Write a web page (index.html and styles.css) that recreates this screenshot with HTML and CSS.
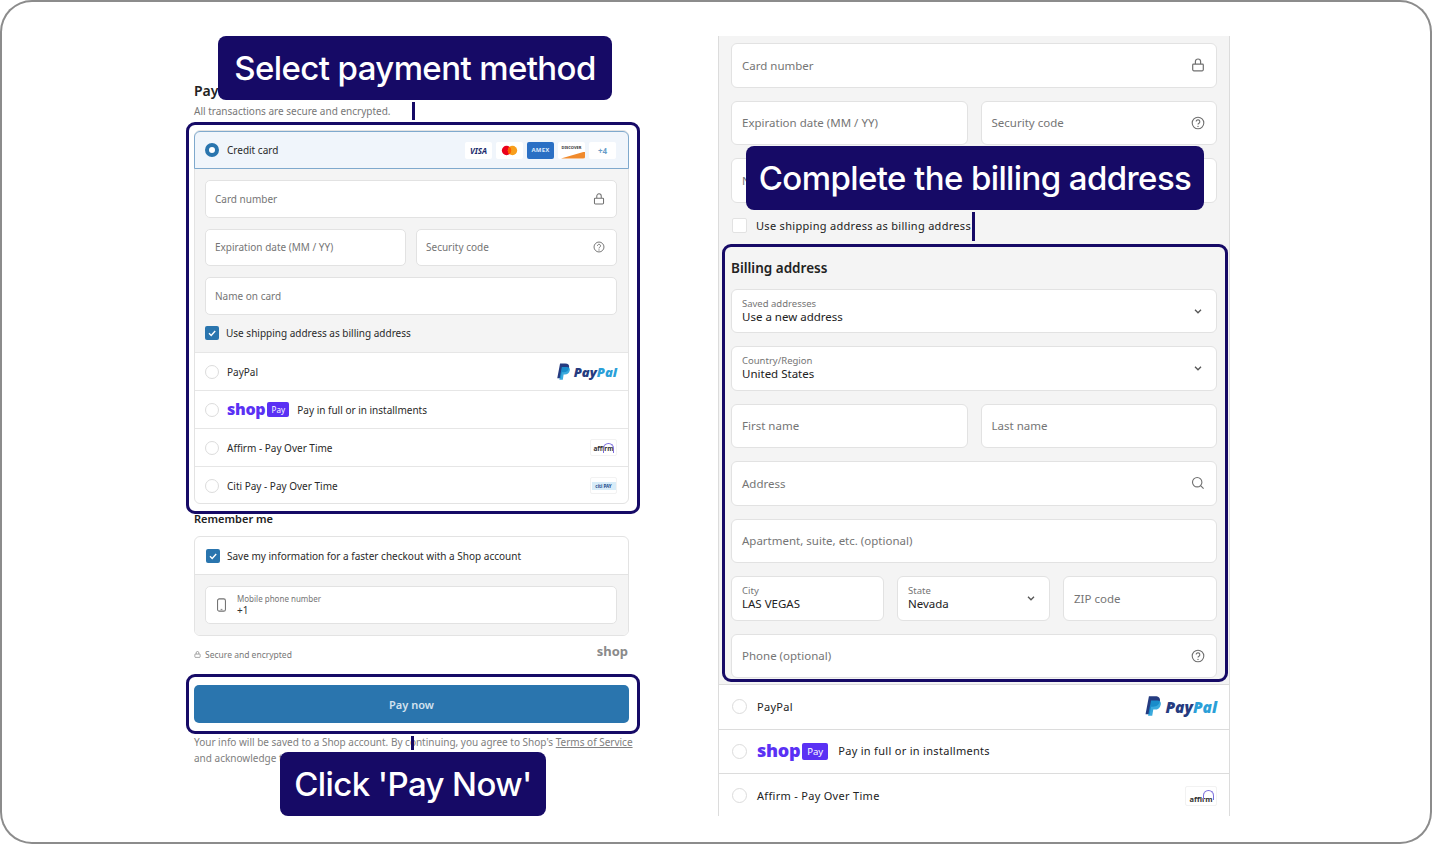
FILE: index.html
```html
<!DOCTYPE html>
<html lang="en">
<head>
<meta charset="utf-8">
<title>Checkout guide</title>
<link rel="stylesheet" href="styles.css">
</head>
<body>
<svg class="defs" width="0" height="0" aria-hidden="true">
  <defs>
    <symbol id="lock" viewBox="0 0 14 14"><path d="M2.5 6.2h9a.8.8 0 0 1 .8.8v4.6a1.2 1.2 0 0 1-1.2 1.2H2.9a1.2 1.2 0 0 1-1.2-1.2V7a.8.8 0 0 1 .8-.8z M4.4 6V3.6a2.6 2.6 0 0 1 5.2 0V6" fill="none" stroke="#707070" stroke-width="1.2"/></symbol>
    <symbol id="help" viewBox="0 0 14 14"><circle cx="7" cy="7" r="5.8" fill="none" stroke="#707070" stroke-width="1.1"/><path d="M5.2 5.6a1.8 1.8 0 1 1 2.7 1.6c-.6.4-.9.7-.9 1.4" fill="none" stroke="#707070" stroke-width="1.1"/><circle cx="7" cy="10.4" r=".7" fill="#707070"/></symbol>
    <symbol id="chev" viewBox="0 0 10 10"><path d="M2 3.8l3 3 3-3" fill="none" stroke="#555" stroke-width="1.3"/></symbol>
    <symbol id="search" viewBox="0 0 14 14"><circle cx="6.2" cy="6.2" r="4.7" fill="none" stroke="#707070" stroke-width="1.1"/><path d="M9.6 9.6l3 3" stroke="#707070" stroke-width="1.1"/></symbol>
    <symbol id="check" viewBox="0 0 14 14"><path d="M4 7.2l2.2 2.2L10.2 5" fill="none" stroke="#fff" stroke-width="1.4"/></symbol>
    <symbol id="pp" viewBox="0 0 20 24"><path d="M5.8 0h7.4c4 0 6.2 2.2 5.5 5.8-.8 4.4-3.8 6.4-7.8 6.4H8.300l-1.500 8.800H1.800z" fill="#253b80"/><path d="M8.300 4.800h7.300c3.300 0 4.700 1.900 4.100 5-.8 4-3.500 5.800-7 5.800h-1.800l-1.200 7.400H4.800z" fill="#179bd7" opacity=".85"/></symbol>
    <symbol id="phone" viewBox="0 0 12 16"><rect x="1.500" y="1" width="9" height="14" rx="2" fill="none" stroke="#707070" stroke-width="1.200"/><path d="M5 13h2" stroke="#707070"/></symbol>
  </defs>
</svg>

<main class="frame">
  <section class="left">
    <h1 class="title">Payment</h1>
    <p class="subtitle">All transactions are secure and encrypted.</p>

    <div class="accordion">
      <div class="row-selected">
        <span class="radio radio-on"></span>
        <span class="label">Credit card</span>
        <span class="brands">
          <span class="brand brand-visa">VISA</span>
          <span class="brand"><svg class="mc" viewBox="0 0 20 12"><circle cx="6.500" cy="6" r="5.500" fill="#eb001b"/><circle cx="13.500" cy="6" r="5.500" fill="#f79e1b"/><path d="M10 1.700a5.500 5.500 0 0 1 0 8.600 5.500 5.500 0 0 1 0-8.600z" fill="#ff5f00"/></svg></span>
          <span class="brand brand-amex">AMEX</span>
          <span class="brand brand-disc">DISCOVER<i class="swoosh"></i></span>
          <span class="brand brand-more">+4</span>
        </span>
      </div>
      <div class="card-form">
        <div class="field"><span class="ph">Card number</span><svg class="ico"><use href="#lock"/></svg></div>
        <div class="split">
          <div class="field"><span class="ph">Expiration date (MM / YY)</span></div>
          <div class="field"><span class="ph">Security code</span><svg class="ico"><use href="#help"/></svg></div>
        </div>
        <div class="field"><span class="ph">Name on card</span></div>
        <div class="check-line"><span class="checkbox"><svg viewBox="0 0 14 14"><use href="#check"/></svg></span><span class="label">Use shipping address as billing address</span></div>
      </div>
      <div class="pay-row"><span class="radio"></span><span class="label">PayPal</span><span class="paypal"><svg class="pp"><use href="#pp"/></svg><b class="pp-a">Pay</b><b class="pp-b">Pal</b></span></div>
      <div class="pay-row"><span class="radio"></span><span class="shop">shop</span><span class="shop-pay">Pay</span><span class="label shop-label">Pay in full or in installments</span></div>
      <div class="pay-row"><span class="radio"></span><span class="label">Affirm - Pay Over Time</span><span class="mini-logo"><i class="arc"></i>affirm</span></div>
      <div class="pay-row"><span class="radio"></span><span class="label">Citi Pay - Pay Over Time</span><span class="mini-logo citi"><span>citi PAY</span></span></div>
    </div>

    <h2 class="remember">Remember me</h2>
    <div class="save-box">
      <div class="save-top"><span class="checkbox"><svg viewBox="0 0 14 14"><use href="#check"/></svg></span><span class="label">Save my information for a faster checkout with a Shop account</span></div>
      <div class="save-form">
        <div class="field field-phone"><svg class="phone-ico"><use href="#phone"/></svg><div class="stack"><span class="float">Mobile phone number</span><span class="val">+1</span></div></div>
      </div>
    </div>
    <div class="secure"><span class="secure-text"><svg class="tiny-lock"><use href="#lock"/></svg>Secure and encrypted</span><b class="shop-grey">shop</b></div>
    <button class="pay-btn" type="button">Pay now</button>
    <p class="legal">Your info will be saved to a Shop account. By continuing, you agree to Shop's <u>Terms of Service</u><br>and acknowledge the Privacy Policy.</p>
  </section>

  <section class="right">
    <div class="r-form">
      <div class="r-field"><span class="ph">Card number</span><svg class="r-ico"><use href="#lock"/></svg></div>
      <div class="r-split">
        <div class="r-field"><span class="ph">Expiration date (MM / YY)</span></div>
        <div class="r-field"><span class="ph">Security code</span><svg class="r-ico"><use href="#help"/></svg></div>
      </div>
      <div class="r-field"><span class="ph">Name on card</span></div>
      <div class="r-check"><span class="r-box"></span><span class="r-label">Use shipping address as billing address</span></div>
      <h2 class="r-heading">Billing address</h2>
      <div class="r-field"><div class="stack"><span class="float">Saved addresses</span><span class="val">Use a new address</span></div><svg class="r-chev"><use href="#chev"/></svg></div>
      <div class="r-field"><div class="stack"><span class="float">Country/Region</span><span class="val">United States</span></div><svg class="r-chev"><use href="#chev"/></svg></div>
      <div class="r-split">
        <div class="r-field"><span class="ph">First name</span></div>
        <div class="r-field"><span class="ph">Last name</span></div>
      </div>
      <div class="r-field"><span class="ph">Address</span><svg class="r-ico"><use href="#search"/></svg></div>
      <div class="r-field"><span class="ph">Apartment, suite, etc. (optional)</span></div>
      <div class="r-triple">
        <div class="r-field"><div class="stack"><span class="float">City</span><span class="val">LAS VEGAS</span></div></div>
        <div class="r-field"><div class="stack"><span class="float">State</span><span class="val">Nevada</span></div><svg class="r-chev"><use href="#chev"/></svg></div>
        <div class="r-field"><span class="ph">ZIP code</span></div>
      </div>
      <div class="r-field"><span class="ph">Phone (optional)</span><svg class="r-ico"><use href="#help"/></svg></div>
    </div>
    <div class="r-row"><span class="r-radio"></span><span class="r-label">PayPal</span><span class="paypal r-paypal"><svg class="pp"><use href="#pp"/></svg><b class="pp-a">Pay</b><b class="pp-b">Pal</b></span></div>
    <div class="r-row"><span class="r-radio"></span><span class="shop r-shop">shop</span><span class="shop-pay r-shop-pay">Pay</span><span class="r-label r-shop-label">Pay in full or in installments</span></div>
    <div class="r-row"><span class="r-radio"></span><span class="r-label">Affirm - Pay Over Time</span><span class="mini-logo r-mini"><i class="arc"></i>affirm</span></div>
  </section>

  <div class="hl hl-methods"></div>
  <div class="hl hl-pay"></div>
  <div class="hl hl-billing"></div>
  <div class="stem stem-methods"></div>
  <div class="stem stem-pay"></div>
  <div class="stem stem-billing"></div>
  <div class="callout callout-methods">Select payment method</div>
  <div class="callout callout-pay">Click 'Pay Now'</div>
  <div class="callout callout-billing">Complete the billing address</div>
</main>
</body>
</html>
```
FILE: styles.css
```css
* { box-sizing: border-box; }
html, body { margin: 0; height: 100%; background: #fff; }
.defs { position: absolute; }
.frame {
  position: relative;
  display: flex;
  align-items: flex-start;
  width: 100%;
  height: 844px;
  overflow: hidden;
  border-radius: 32px;
  box-shadow: inset 0 0 0 2px #8c8c8c;
  font-family: "Noto Sans", "Open Sans", sans-serif;
  color: #222;
}

/* left column */
.left { width: 435px; margin-left: 194px; padding-top: 82px; }
.title { margin: 0; font-size: 14px; line-height: 18px; font-weight: 600; color: #222; }
.subtitle { margin: 3px 0 0; font-size: 10px; line-height: 16px; color: #777; }
.accordion {
  margin-top: 11px;
  height: 374px;
  border: 1px solid #e3e3e3;
  border-radius: 6px;
  background: #fff;
}
.row-selected {
  display: flex;
  align-items: center;
  height: 38px;
  margin: 0 -1px;
  padding: 0 12px 0 10px;
  background: #f0f5fb;
  border: 1.5px solid #7fa9cd;
  border-radius: 6px 6px 0 0;
}
.radio {
  flex: none;
  width: 14px;
  height: 14px;
  margin-right: 8px;
  border: 1px solid #dcdcdc;
  border-radius: 50%;
  background: #fff;
}
.radio-on { border: 4px solid #2a75ae; }
.label { font-size: 10px; line-height: 14px; color: #2a2a2a; white-space: nowrap; }
.brands { display: flex; gap: 4px; margin-left: auto; }
.brand {
  position: relative;
  display: flex;
  align-items: center;
  justify-content: center;
  width: 27px;
  height: 17px;
  overflow: hidden;
  border-radius: 2px;
  background: #fff;
  font-size: 8px;
  font-weight: 700;
}
.brand-visa { color: #1a2a6c; font-style: italic; }
.mc { width: 17px; height: 11px; }
.brand-amex { background: #2a6fc4; color: #dbe9fb; font-size: 6px; letter-spacing: .2px; }
.brand-disc { align-items: flex-start; padding-top: 3px; font-size: 4px; color: #333; }
.swoosh { position: absolute; right: 0; bottom: 0; width: 24px; height: 7px; background: #f08a2c; clip-path: polygon(100% 0, 100% 100%, 0 100%); }
.brand-more { color: #6a9cc8; font-size: 8px; }
.card-form {
  display: flex;
  flex-direction: column;
  gap: 11px;
  height: 183px;
  padding: 11px 11px 0 10px;
  background: #f4f4f4;
}
.field {
  display: flex;
  align-items: center;
  justify-content: space-between;
  height: 37.500px;
  padding: 0 11px 0 9px;
  background: #fff;
  border: 1px solid #e2e2e2;
  border-radius: 5px;
}
.split { display: grid; grid-template-columns: 1fr 1fr; gap: 10px; }
.ph { font-size: 10px; color: #757575; white-space: nowrap; }
.ico { width: 12px; height: 12px; }
.check-line { display: flex; align-items: center; height: 14px; }
.checkbox {
  flex: none;
  display: block;
  width: 14px;
  height: 14px;
  margin-right: 7px;
  border-radius: 2px;
  background: #2a75ae;
}
.checkbox svg { display: block; width: 14px; height: 14px; }
.pay-row {
  display: flex;
  align-items: center;
  height: 38px;
  padding: 0 11px 0 10px;
  border-top: 1px solid #e6e6e6;
}
.paypal { display: flex; align-items: center; margin-left: auto; font-size: 13px; font-style: italic; font-weight: 800; font-family: "Open Sans", sans-serif; }
.pp { width: 14px; height: 18px; margin-right: 4px; }
.pp-a { color: #253b80; }
.pp-b { color: #2b9fd8; }
.shop { font-size: 16px; font-weight: 800; line-height: 16px; color: #5a31f4; letter-spacing: -.3px; font-family: "Open Sans", sans-serif; margin-top: -2px; }
.shop-pay { margin-left: 2px; width: 22px; height: 15px; border-radius: 2px; background: #5a31f4; color: #fff; font-size: 8px; line-height: 15px; text-align: center; }
.shop-label { margin-left: 8px; }
.mini-logo {
  position: relative;
  display: flex;
  align-items: flex-end;
  justify-content: center;
  margin-left: auto;
  width: 27px;
  height: 17px;
  padding-bottom: 2px;
  border: 1px solid #f2f2f2;
  border-radius: 2px;
  font-size: 6.500px;
  line-height: 8px;
  font-weight: 700;
  color: #333;
}
.arc { position: absolute; right: 2px; top: 3px; width: 11px; height: 10px; border: 1.200px solid #7c6fdc; border-bottom: 0; border-radius: 6px 6px 0 0; }
.citi { align-items: center; padding: 0; }
.citi span { display: block; width: 24px; background: #d8ecf8; text-align: center; font-size: 4.500px; color: #1b4b8c; }

.remember { margin: 8px 0 0; font-size: 11px; line-height: 14px; font-weight: 600; color: #222; }
.save-box {
  margin-top: 10px;
  height: 100px;
  border: 1px solid #e3e3e3;
  border-radius: 6px;
  overflow: hidden;
}
.save-top { display: flex; align-items: center; height: 38px; padding-left: 11px; border-bottom: 1px solid #e3e3e3; }
.save-form { height: 60px; padding: 11px 11px 0 10px; background: #f4f4f4; }
.field-phone { justify-content: flex-start; height: 38px; padding-left: 10px; }
.phone-ico { width: 11px; height: 14px; margin-right: 10px; }
.stack { display: flex; flex-direction: column; }
.float { font-size: 8px; line-height: 10px; color: #757575; white-space: nowrap; }
.val { font-size: 10px; line-height: 13px; color: #333; white-space: nowrap; }
.secure { display: flex; align-items: center; justify-content: space-between; height: 24px; margin-top: 3px; }
.secure-text { display: flex; align-items: center; margin-top: 6px; font-size: 8.500px; color: #777; }
.tiny-lock { width: 7px; height: 7px; margin-right: 4px; }
.shop-grey { font-size: 13px; font-weight: 700; color: #8a8a8a; margin-right: 1px; margin-top: 0; }
.pay-btn {
  display: block;
  width: 100%;
  height: 38px;
  margin-top: 22px;
  border: 0;
  border-radius: 5px;
  background: #2a75ae;
  color: #d3e2ef;
  font: 600 11px "Noto Sans", sans-serif;
}
.legal { margin: 11px 0 0; font-size: 10px; line-height: 16px; color: #808080; white-space: nowrap; }

/* right column */
.right {
  width: 512px;
  height: 780px;
  margin: 36px 0 0 89px;
  overflow: hidden;
  background: #fff;
  border: solid #dcdcdc;
  border-width: 0 1px;
}
.r-form {
  display: flex;
  flex-direction: column;
  gap: 13px;
  height: 649px;
  padding: 7px 12px 0;
  background: #f4f4f4;
  border-bottom: 1px solid #dcdcdc;
}
.r-field {
  display: flex;
  align-items: center;
  justify-content: space-between;
  height: 44.500px;
  flex: none;
  padding: 0 11px 0 10px;
  background: #fff;
  border: 1px solid #e2e2e2;
  border-radius: 6px;
}
.r-field .ph { font-size: 11.500px; }
.r-field .float { font-size: 9.500px; line-height: 12px; }
.r-field .val { font-size: 11.500px; line-height: 14px; color: #222; }
.r-ico { width: 14px; height: 14px; }
.r-chev { width: 10px; height: 10px; margin-right: 2px; }
.r-split { display: grid; grid-template-columns: 1fr 1fr; gap: 13px; }
.r-triple { display: grid; grid-template-columns: 153px 153px 154px; gap: 13px; }
.r-check { display: flex; align-items: center; height: 16px; margin-top: 2px; }
.r-box { flex: none; width: 15px; height: 15px; margin: 0 9px 0 1px; border: 1px solid #e2e2e2; border-radius: 2px; background: #fff; }
.r-label { font-size: 11px; line-height: 14px; color: #222; letter-spacing: .3px; white-space: nowrap; }
.r-heading { margin: 12px 0 -1px; font-size: 13.500px; line-height: 18px; font-weight: 600; color: #222; }
.r-row {
  display: flex;
  align-items: center;
  height: 44.500px;
  padding: 0 12px;
  border-bottom: 1px solid #dcdcdc;
}
.r-radio { flex: none; width: 15px; height: 15px; margin: 0 10px 0 1px; border: 1px solid #dcdcdc; border-radius: 50%; background: #fff; }
.r-paypal { font-size: 15.500px; }
.r-paypal .pp { width: 17px; height: 21px; }
.r-shop { font-size: 18px; }
.r-shop-pay { width: 26px; height: 17px; line-height: 17px; font-size: 9.500px; }
.r-shop-label { margin-left: 10px; }
.r-mini { width: 32px; height: 20px; font-size: 7.500px; }

/* guide overlays */
.hl { position: absolute; border: 3px solid #160a66; border-radius: 9px; pointer-events: none; }
.hl-methods { left: 186px; top: 122px; width: 454px; height: 392px; }
.hl-pay { left: 186px; top: 674px; width: 454px; height: 60px; }
.hl-billing { left: 722px; top: 244px; width: 506px; height: 438px; }
.stem { position: absolute; width: 3px; background: #160a66; }
.stem-methods { left: 412px; top: 102px; height: 18px; }
.stem-pay { left: 411px; top: 736px; height: 14px; }
.stem-billing { left: 972px; top: 212px; height: 29px; }
.callout {
  position: absolute;
  height: 64px;
  border-radius: 8px;
  background: #160a66;
  color: #fff;
  font-family: Inter, "Noto Sans", sans-serif;
  font-size: 33px;
  font-weight: 500;
  letter-spacing: -.6px;
  line-height: 64px;
  text-align: center;
  white-space: nowrap;
}
.callout-methods { left: 218px; top: 36px; width: 394px; }
.callout-pay { left: 280px; top: 752px; width: 266px; }
.callout-billing { left: 746px; top: 146px; width: 458px; }
```
